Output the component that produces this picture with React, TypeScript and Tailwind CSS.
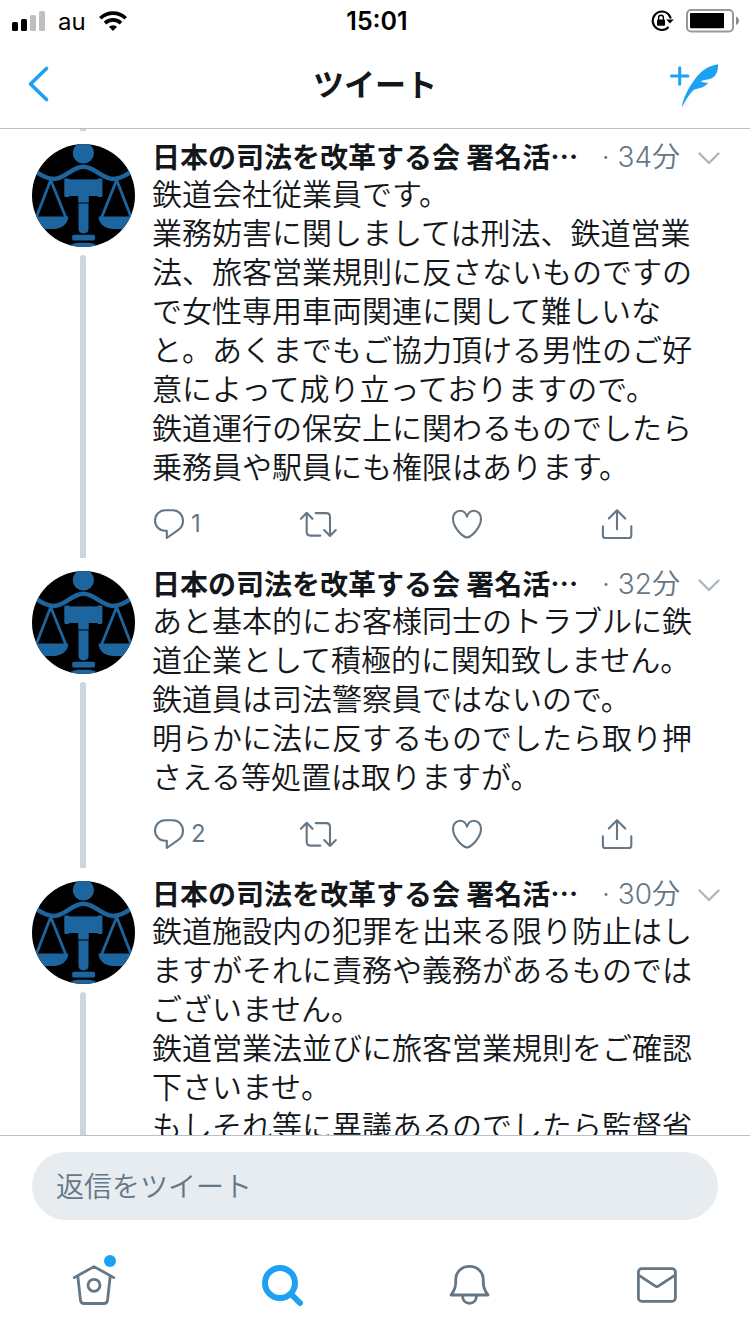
import type { ReactNode } from "react"

type Tweet = {
  id: number
  time: string
  replies?: number
  paragraphs: string[]
}

const AUTHOR = "日本の司法を改革する会 署名活…"

const tweets: Tweet[] = [
  {
    id: 1,
    time: "34分",
    replies: 1,
    paragraphs: [
      "鉄道会社従業員です。",
      "業務妨害に関しましては刑法、鉄道営業法、旅客営業規則に反さないものですので女性専用車両関連に関して難しいなと。あくまでもご協力頂ける男性のご好意によって成り立っておりますので。",
      "鉄道運行の保安上に関わるものでしたら乗務員や駅員にも権限はあります。",
    ],
  },
  {
    id: 2,
    time: "32分",
    replies: 2,
    paragraphs: [
      "あと基本的にお客様同士のトラブルに鉄道企業として積極的に関知致しません。",
      "鉄道員は司法警察員ではないので。",
      "明らかに法に反するものでしたら取り押さえる等処置は取りますが。",
    ],
  },
  {
    id: 3,
    time: "30分",
    paragraphs: [
      "鉄道施設内の犯罪を出来る限り防止はしますがそれに責務や義務があるものではございません。",
      "鉄道営業法並びに旅客営業規則をご確認下さいませ。",
      "もしそれ等に異議あるのでしたら監督省",
    ],
  },
]

export default function App() {
  return (
    <div
      lang="ja"
      className="h-screen flex flex-col overflow-hidden bg-white text-[#14171a] font-['Inter','Noto_Sans_CJK_JP',sans-serif]"
    >
      <StatusBar />

      {/* Header */}
      <header className="h-[89px] flex-shrink-0 grid grid-cols-3 items-center border-b border-[#b4c2cd] px-8">
        <button aria-label="戻る" className="justify-self-start">
          <svg className="w-5 h-10 overflow-visible" viewBox="4 0 20 40" fill="none">
            <path
              d="M18.5 4.5L2.5 20l16 15.5"
              stroke="#1da1f2"
              strokeWidth={3.6}
              strokeLinecap="round"
              strokeLinejoin="round"
            />
          </svg>
        </button>
        <h1 className="justify-self-center pt-0.5 text-[31px] leading-10 font-bold">ツイート</h1>
        <button aria-label="ツイートを作成" className="justify-self-end">
          <ComposeIcon />
        </button>
      </header>

      {/* Thread */}
      <main className="flex-1 min-h-0 overflow-hidden">
        <div className="h-0.5 w-1.5 ml-20 bg-[#ccd6dd]" />
        {tweets.map(tweet => (
          <TweetRow key={tweet.id} tweet={tweet} />
        ))}
      </main>

      {/* Reply box */}
      <div className="flex-shrink-0 border-t border-[#b4c2cd] px-8 pt-4">
        <input
          type="text"
          aria-label="返信をツイート"
          placeholder="返信をツイート"
          className="block w-full h-[68px] rounded-full bg-[#e6ecf0] px-6 pt-0.5 text-[28px] font-[350] outline-none placeholder:text-[#657786] placeholder:opacity-100"
        />
      </div>

      <TabBar />
    </div>
  )
}

function StatusBar() {
  return (
    <div className="h-10 flex-shrink-0 grid grid-cols-3 items-center px-3 text-black">
      <div className="flex items-center">
        <svg className="w-[34px] h-5" viewBox="0 0 34 20">
          <rect x="0" y="11" width="6" height="9" rx="1.5" />
          <rect x="9" y="8" width="6" height="12" rx="1.5" />
          <rect x="18" y="4" width="6" height="16" rx="1.5" fill="#bfbfbf" />
          <rect x="27" y="0" width="6" height="20" rx="1.5" fill="#bfbfbf" />
        </svg>
        <span className="ml-3 pt-0.5 text-2xl leading-10">au</span>
        <svg className="ml-[13px] w-7 h-5" viewBox="0 0 28 20">
          <g fill="none" stroke="#000" strokeWidth={3.6}>
            <path d="M1.3 7.2a18.4 18.4 0 0 1 25.4 0" />
            <path d="M6 12.1a11.6 11.6 0 0 1 16 0" />
          </g>
          <path d="M14 20l-4.1-4.2a6 6 0 0 1 8.2 0z" />
        </svg>
      </div>
      <div className="justify-self-center pl-1 text-[25px] leading-10 font-semibold">15:01</div>
      <div className="justify-self-end flex items-center gap-3">
        <svg className="w-6 h-6" viewBox="0 0 24 24" fill="none" stroke="#000" strokeWidth={2}>
          <path d="M20.8 9.4A9.2 9.2 0 1 0 18.6 18" />
          <path d="M16.2 10.6h7.6L20 14.4z" fill="#000" stroke="none" />
          <rect x="7" y="10.6" width="8" height="6.2" rx="1" fill="#000" stroke="none" />
          <path d="M8.6 11V8.6a2.4 2.4 0 0 1 4.8 0V11" strokeWidth={1.4} />
        </svg>
        <svg className="w-[52px] h-6 overflow-visible" viewBox="0 0 52 24">
          <rect x="1" y="1" width="46" height="21.4" rx="4" fill="none" stroke="#999" strokeWidth={2} />
          <rect x="4" y="4" width="34" height="15.2" rx="0.8" />
          <path d="M50 7.6c4 1.6 4 6.8 0 8.4z" fill="#8c8c8c" />
        </svg>
      </div>
    </div>
  )
}

function TweetRow({ tweet }: { tweet: Tweet }) {
  return (
    <article className="flex">
      {/* Avatar + thread line */}
      <div className="w-[103px] ml-8 mr-[17px] pt-[13px] flex-shrink-0 flex flex-col">
        <Avatar />
        <div className="mt-2 ml-12 w-1.5 flex-1 rounded-t-full bg-[#ccd6dd]" />
      </div>

      <div className="flex-1 min-w-0 pt-[5px] pb-[18px]">
        <div className="flex items-center pr-[30px] h-[39px]">
          <span className="font-['Noto_Sans_CJK_JP',sans-serif] text-[28px] leading-[38px] font-bold whitespace-nowrap">
            {AUTHOR}
          </span>
          <span className="ml-auto pt-0.5 text-[28px] leading-[38px] font-[350] text-[#657786] whitespace-nowrap">
            · {tweet.time}
          </span>
          <button aria-label="メニュー" className="ml-[18px] pt-1">
            <svg className="w-[22px] h-4" viewBox="0 0 22 16" fill="none">
              <path
                d="M1.5 3.5L11 13l9.5-9.5"
                stroke="#aab8c2"
                strokeWidth={2.4}
                strokeLinecap="round"
                strokeLinejoin="round"
              />
            </svg>
          </button>
        </div>

        <div className="pr-[30px] text-[30px] leading-[39px] font-[350]">
          {tweet.paragraphs.map((text, i) => (
            <p key={i}>{text}</p>
          ))}
        </div>

        <div className="mt-[21px] grid grid-cols-4 text-[#657786]">
          <Action label="返信" count={tweet.replies}>
            <path d="M13 2.2h8c5.5 0 10 4.8 10 10.6 0 4-2 7.3-5 9.3L14.8 30v-7.2H13c-5.5 0-10-4.5-10-10.2S7.5 2.2 13 2.2z" />
          </Action>
          <Action label="リツイート" wide>
            <path d="M.9 10.8l5.8-6 5.8 6M6.7 5.2v18.6c0 2.4 1.4 3.8 3.8 3.8h9.8" />
            <path d="M15.7 5.1h10.5c2.4 0 3.8 1.4 3.8 3.8v18.4M24.2 22l5.8 6 5.8-6" />
          </Action>
          <Action label="いいね">
            <path d="M16 8.6C14.8 4.8 12 2.8 9.2 2.8 5 2.8 2 6.2 2 10.8 2 19.4 11 28.4 16 29.6c5-1.2 14-10.2 14-18.8 0-4.6-3-8-7.2-8-2.8 0-5.6 2-6.8 5.8z" />
          </Action>
          <Action label="共有">
            <path d="M1.9 18.2v9.2c0 1.8.9 2.6 2.6 2.6h23.2c1.7 0 2.6-.8 2.6-2.6v-9.2" />
            <path d="M16 21.2V2.4M7.8 10.6L16 2.2l8.2 8.4" />
          </Action>
        </div>
      </div>
    </article>
  )
}

function Action({
  label,
  count,
  wide,
  children,
}: {
  label: string
  count?: number
  wide?: boolean
  children: ReactNode
}) {
  return (
    <button aria-label={label} className="h-8 flex items-center gap-[7px]">
      <svg
        className={wide ? "w-[38px] h-8 overflow-visible" : "w-8 h-8"}
        viewBox={wide ? "2 0 38 32" : "0 0 32 32"}
        fill="none"
        stroke="currentColor"
        strokeWidth={2.1}
        strokeLinecap="round"
        strokeLinejoin="round"
      >
        {children}
      </svg>
      {count !== undefined && <span className="text-2xl leading-8">{count}</span>}
    </button>
  )
}

function Avatar() {
  return (
    <svg className="w-[103px] h-[103px] rounded-full bg-black" viewBox="0 0 103 103" fill="#1d659f">
      <circle cx="51.4" cy="9" r="10.6" />
      <path
        d="M0 25.500C7 29.500 13 35 21.500 35 33 35 40 22.800 51.400 22.800S70 35 81.500 35c8.500 0 14.500-5.500 21.500-9.500"
        fill="none"
        stroke="#1d659f"
        strokeWidth={4.4}
      />
      {/* scales */}
      <path
        d="M4 74l14.700-38L34 74M69.400 74l15.300-38L99.400 74"
        fill="none"
        stroke="#1d659f"
        strokeWidth={2.8}
      />
      <path d="M0 72.600h36.300c0 7-6.600 12.500-15 12.500H14C7 85.100 0 80 0 72.600z" />
      <path d="M66.500 72.600H103c0 7-7 12.500-14 12.500h-7.600c-8.400 0-14.900-5.500-14.900-12.500z" />
      {/* gavel */}
      <rect x="32.300" y="34.400" width="5" height="18.600" rx="1.200" />
      <rect x="65.400" y="34.400" width="5" height="18.600" rx="1.200" />
      <rect x="35" y="35.400" width="33" height="16.600" />
      <path d="M46.200 51h10.600v7.400H46.200z" />
      <path d="M46.500 59.400h10v25.400c0 3-1.800 4.600-5 4.600s-5-1.600-5-4.600z" />
      <rect x="40.200" y="90.800" width="22.800" height="5.800" rx="1.500" />
      <path d="M36 103c3-3.200 7-4.200 11-4.200h9c4 0 8 1 11 4.200z" />
    </svg>
  )
}

function ComposeIcon() {
  return (
    <svg className="w-[50px] h-12" viewBox="0 0 50 48" fill="#1da1f2">
      <path d="M11.700 7.800v16.400M3.500 16h16.400" stroke="#1da1f2" strokeWidth={3} strokeLinecap="round" />
      <path d="M14 47.400c.4-4.800 2-9.700 4.400-14.400C21 27.800 23.600 23.600 27 19c3-4 6.300-7.500 10.300-10 3.900-2.500 8-4 12.600-4.700.2 3.300-.1 6-1.200 8.500-1.200 2.800-2.900 4.700-5.300 5.700-3.400 1.400-7.200 1.100-10.700 2.800 2.200 1.200 4.600 1.700 7.600 1.200-1.700 2.400-3.700 4-6.300 4.900-3 1-6.200 1.100-8.700 2.900-4.700 4.400-8.100 11-11.300 17.100z" />
    </svg>
  )
}

function TabBar() {
  return (
    <nav className="flex-shrink-0 grid grid-cols-4 justify-items-center pt-[41px] pb-[25px] text-[#657786]">
      <a href="#home" aria-label="ホーム" className="relative">
        <TabIcon>
          <path d="M4.200 16.600L24 5.600l19.800 11" />
          <path d="M7.800 15.200l2.600 23.600c.3 2.600 1.300 3.700 3.700 3.700h19.800c2.400 0 3.400-1.100 3.700-3.700l2.600-23.600" />
          <circle cx="24" cy="24.300" r="6" />
        </TabIcon>
        <span className="absolute -top-1.5 right-0.5 w-3 h-3 rounded-full bg-[#1da1f2]" />
      </a>
      <a href="#search" aria-label="検索" className="text-[#1da1f2]">
        <TabIcon>
          <g strokeWidth={6}>
            <circle cx="23" cy="22" r="15" />
            <path d="M34 33l9 9" />
          </g>
        </TabIcon>
      </a>
      <a href="#notifications" aria-label="通知">
        <TabIcon>
          <path d="M6 34c2.800-3.400 4.700-7.400 4.700-12.400V19c0-8 6-13.600 13.800-13.600S38.300 11 38.300 19v2.600c0 5 1.900 9 4.700 12.400z" />
          <path d="M17.500 35.200c.3 4.200 3 7.200 7 7.200s6.700-3 7-7.200" />
        </TabIcon>
      </a>
      <a href="#messages" aria-label="メッセージ">
        <TabIcon>
          <rect x="6.400" y="7.700" width="37" height="32.600" rx="3.400" />
          <path d="M7 14.400l16.400 10.800c1 .7 1.900.7 2.900 0l16.400-10.800" />
        </TabIcon>
      </a>
    </nav>
  )
}

function TabIcon({ children }: { children: ReactNode }) {
  return (
    <svg
      className="w-12 h-12"
      viewBox="0 0 48 48"
      fill="none"
      stroke="currentColor"
      strokeWidth={2.8}
      strokeLinecap="round"
      strokeLinejoin="round"
    >
      {children}
    </svg>
  )
}
